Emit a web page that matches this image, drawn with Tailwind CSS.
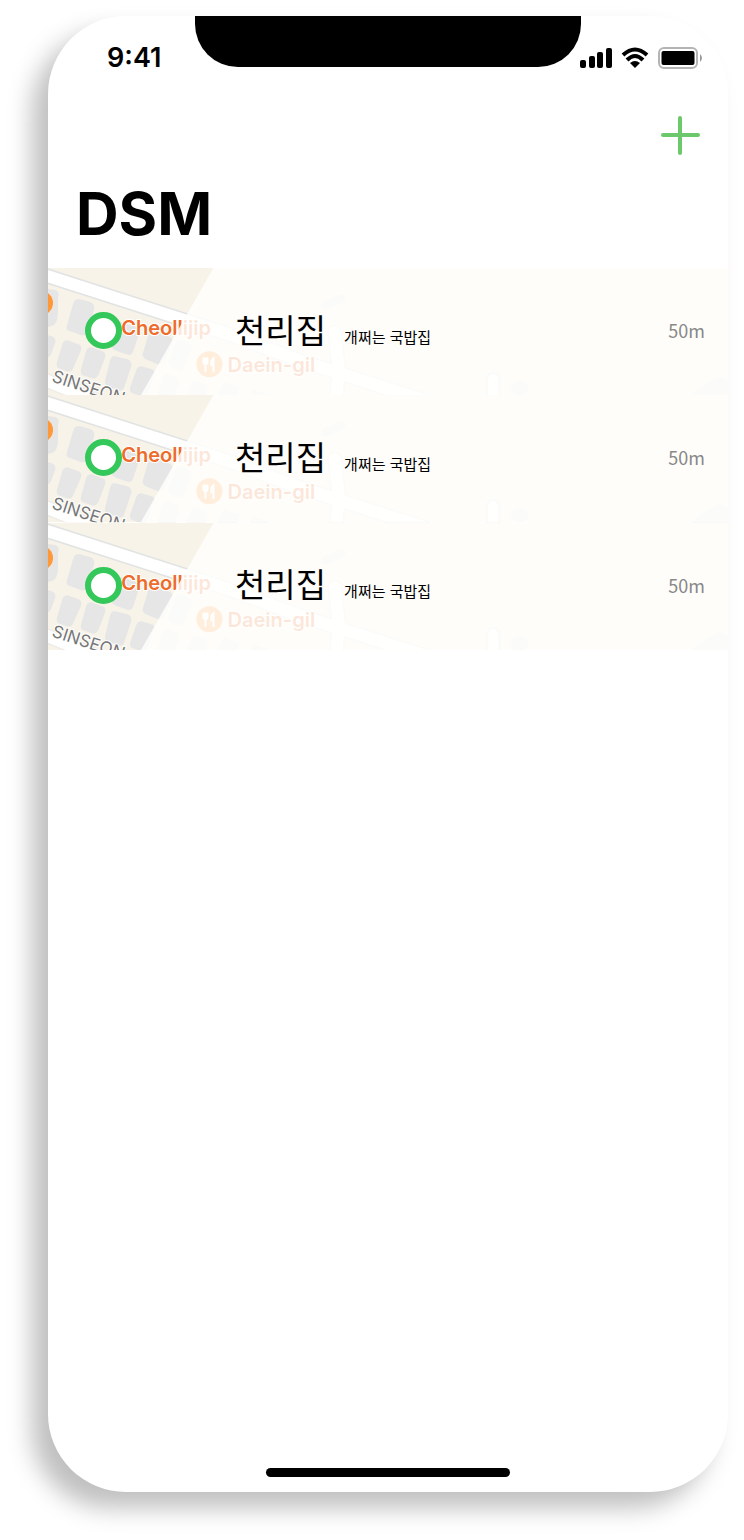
<!DOCTYPE html>
<html lang="ko">
<head>
<meta charset="utf-8">
<meta name="viewport" content="width=device-width, initial-scale=1">
<title>DSM</title>
<script src="https://cdn.jsdelivr.net/npm/@tailwindcss/browser@4"></script>
</head>
<body class="flex min-h-screen bg-white pt-4 pr-4 pb-12 pl-12 font-['Inter','Noto_Sans_CJK_KR',sans-serif] text-black">

<!-- Map tile shared by every row -->
<svg class="absolute size-0" aria-hidden="true">
  <defs>
    <symbol id="map" viewBox="0 0 680 127" preserveAspectRatio="xMinYMin slice">
      <rect width="1400" height="127" fill="#f7f3e8"/>
      <g fill="#e6e6e6" stroke="#e6e6e6" stroke-width="2" stroke-linejoin="round">
        <path d="M0 22 L7 23 Q11 24 9 30 L9 44 Q9 56 3 57 L0 58Z"/>
        <path d="M0 68 Q8 69 6 75 L2 86 L0 88Z"/>
        <path d="M31 32 L42 35 Q46 37 45 41 L38 63 Q37 67 33 66 L22 62 Q18 61 20 57 L26 36 Q27 32 31 32Z"/>
        <path d="M19 73 L30 77 Q33 78 32 82 L24 100 Q23 103 19 102 L11 99 Q9 98 10 94 L15 77 Q16 73 19 73Z"/>
        <path d="M43 80 L54 84 Q57 85 56 89 L49 107 Q47 110 44 109 L35 106 Q33 105 34 101 L39 83 Q40 80 43 80Z"/>
        <path d="M67 89 L79 92 Q83 94 82 98 L75 119 Q74 122 70 121 L60 117 Q57 116 58 112 L63 92 Q64 88 67 89Z"/>
        <path d="M93 99 L103 102 Q106 103 105 107 L98 125 Q97 128 93 127 L85 124 Q82 123 83 119 L89 102 Q90 99 93 99Z"/>
        <path d="M70 54 L86 59 Q91 61 90 65 L84 83 Q82 87 78 85 L67 81 Q64 80 65 76Z"/>
        <path d="M105 64 L120 69 Q124 71 123 75 L116 92 Q114 96 110 95 L98 90 Q94 88 96 84 L101 67 Q102 64 105 64Z"/>
        <path d="M129 72 L140 75 Q143 77 142 81 L135 99 Q134 102 130 101 L123 98 Q120 97 121 93Z"/>
        <path d="M119 107 L128 110 Q131 112 130 115 L126 127 H110 L115 110 Q116 106 119 107Z"/>
        <path d="M145 113 L156 117 Q159 119 158 122 L156 127 H139Z"/>
        <path d="M176 115 L190 120 L187 127 H170Z"/>
        <path d="M205 122 L220 127 H203Z"/>
        <path d="M275 34 L293 27 Q298 29 295 33 L278 40 Q270 40 275 34Z"/>
        <ellipse cx="470" cy="120" rx="8" ry="6"/>
        <path d="M643 127 L658 115 L670 110 L680 114 V127Z"/>
      </g>
      <g fill="none" stroke-linecap="round" stroke-linejoin="round">
        <g stroke="#e2e3e3" stroke-width="15">
          <path d="M-10 5 L130 50 L180 66 L250 92 L375 132"/>
          <path d="M286 64 L290 100 L287 140"/>
          <path d="M444 111 V140"/>
          <path d="M-10 109 L70 141" stroke="#efede6"/>
        </g>
        <g stroke="#fff" stroke-width="12">
          <path d="M-10 5 L130 50 L180 66 L250 92 L375 132"/>
          <path d="M286 64 L290 100 L287 140"/>
          <path d="M444 111 V140" stroke-width="10"/>
          <path d="M-10 109 L70 141"/>
        </g>
      </g>
      <circle cx="-7" cy="35" r="12" fill="#ff9838"/>
      <text x="3" y="113" transform="rotate(18 3 113)" font-size="17" fill="#777" stroke="#fff" stroke-width="2" paint-order="stroke">SINSEON</text>
      <text x="73" y="67" font-size="20" font-weight="600" fill="#ee6c2b" stroke="#fff" stroke-width="2" paint-order="stroke">Cheollijip</text>
      <circle cx="161" cy="96" r="13" fill="#ff9838"/>
      <g fill="none" stroke="#fff" stroke-width="2" stroke-linecap="round">
        <path d="M155 90 V94 Q155 96 157 96 Q159 96 159 94 V90 M157 90 V103"/>
        <path d="M165 103 V90 Q162 92 163 97 H165"/>
      </g>
      <text x="179" y="104" font-size="20" font-weight="600" fill="#ee6c2b" stroke="#fff" stroke-width="2" paint-order="stroke">Daein-gil</text>
      <path d="M165 0 H1400 V128 H92Z" fill="#fffffe" fill-opacity="0.83"/>
    </symbol>
  </defs>
</svg>

<main class="flex flex-1 flex-col overflow-hidden rounded-[78px] bg-white shadow-[-16px_16px_24px_rgba(0,0,0,0.25)]">
  <header>
    <div class="grid grid-cols-[minmax(0,1fr)_386px_minmax(0,1fr)] items-start">
      <div class="pt-6 pl-[59px] text-[27px] leading-9 font-semibold">9:41</div>
      <div class="h-[51px] rounded-b-[43px] bg-black"></div>
      <div class="flex items-center justify-end gap-[9px] pt-[31px] pr-[26px]">
        <svg class="h-[22px] w-8 shrink-0" viewBox="0 0 32 22" role="img" aria-label="Signal">
          <rect x="0" y="13" width="6" height="8" rx="2"/><rect x="9" y="9" width="6" height="12" rx="2"/><rect x="17" y="5" width="6" height="16" rx="2"/><rect x="26" y="1" width="6" height="20" rx="2"/>
        </svg>
        <svg class="h-[22px] w-7 shrink-0" viewBox="0 0 28 22" role="img" aria-label="Wi-Fi">
          <g fill="none" stroke="#000" stroke-width="4"><path d="M2 8 Q14 -3 26 8"/><path d="M6 13 Q14 5 22 13"/></g>
          <path d="M9 16 Q14 12 19 16 L14 21Z"/>
        </svg>
        <svg class="h-[22px] w-11 shrink-0" viewBox="0 0 44 22" role="img" aria-label="Battery">
          <rect x="1" y="1" width="38" height="20" rx="5" fill="none" stroke="#b4b4b4" stroke-width="2"/>
          <rect x="3.5" y="4" width="33" height="14" rx="2"/>
          <path d="M42 7 Q46 11 42 15Z" fill="#999"/>
        </svg>
      </div>
    </div>
    <div class="flex justify-end pt-[39px] pr-7">
      <button type="button" aria-label="Add" class="size-10">
        <svg class="size-10" viewBox="0 0 40 40" fill="none" stroke="#6bc86b" stroke-width="4" stroke-linecap="round"><path d="M20 3 V38 M3 20 H38"/></svg>
      </button>
    </div>
    <h1 class="mt-[19px] pl-7 text-[59px] leading-[80px] font-bold">DSM</h1>
  </header>

  <ul class="mt-[14px] grid h-[382px] grid-rows-3">
    <li class="relative overflow-hidden">
      <svg class="absolute inset-0 size-full" aria-hidden="true"><use href="#map"/></svg>
      <a href="#" class="relative flex h-full items-center pr-[23px] pb-[2px] pl-[37px] font-['Noto_Sans_CJK_KR',sans-serif]">
        <span class="size-[37px] shrink-0 rounded-full border-6 border-[#34c759] bg-white"></span>
        <span class="ml-[113px] flex items-baseline gap-[18px] pb-1"><span class="text-[33px] leading-10">천리집</span><span class="text-[15px]">개쩌는 국밥집</span></span>
        <span class="ml-auto text-[18px] text-[#888]">50m</span>
      </a>
    </li>
    <li class="relative overflow-hidden">
      <svg class="absolute inset-0 size-full" aria-hidden="true"><use href="#map"/></svg>
      <a href="#" class="relative flex h-full items-center pr-[23px] pb-[2px] pl-[37px] font-['Noto_Sans_CJK_KR',sans-serif]">
        <span class="size-[37px] shrink-0 rounded-full border-6 border-[#34c759] bg-white"></span>
        <span class="ml-[113px] flex items-baseline gap-[18px] pb-1"><span class="text-[33px] leading-10">천리집</span><span class="text-[15px]">개쩌는 국밥집</span></span>
        <span class="ml-auto text-[18px] text-[#888]">50m</span>
      </a>
    </li>
    <li class="relative overflow-hidden">
      <svg class="absolute inset-0 size-full" aria-hidden="true"><use href="#map"/></svg>
      <a href="#" class="relative flex h-full items-center pr-[23px] pb-[2px] pl-[37px] font-['Noto_Sans_CJK_KR',sans-serif]">
        <span class="size-[37px] shrink-0 rounded-full border-6 border-[#34c759] bg-white"></span>
        <span class="ml-[113px] flex items-baseline gap-[18px] pb-1"><span class="text-[33px] leading-10">천리집</span><span class="text-[15px]">개쩌는 국밥집</span></span>
        <span class="ml-auto text-[18px] text-[#888]">50m</span>
      </a>
    </li>
  </ul>

  <div class="mx-auto mt-auto mb-[15px] h-[9px] w-[244px] rounded-full bg-black"></div>
</main>
</body>
</html>
